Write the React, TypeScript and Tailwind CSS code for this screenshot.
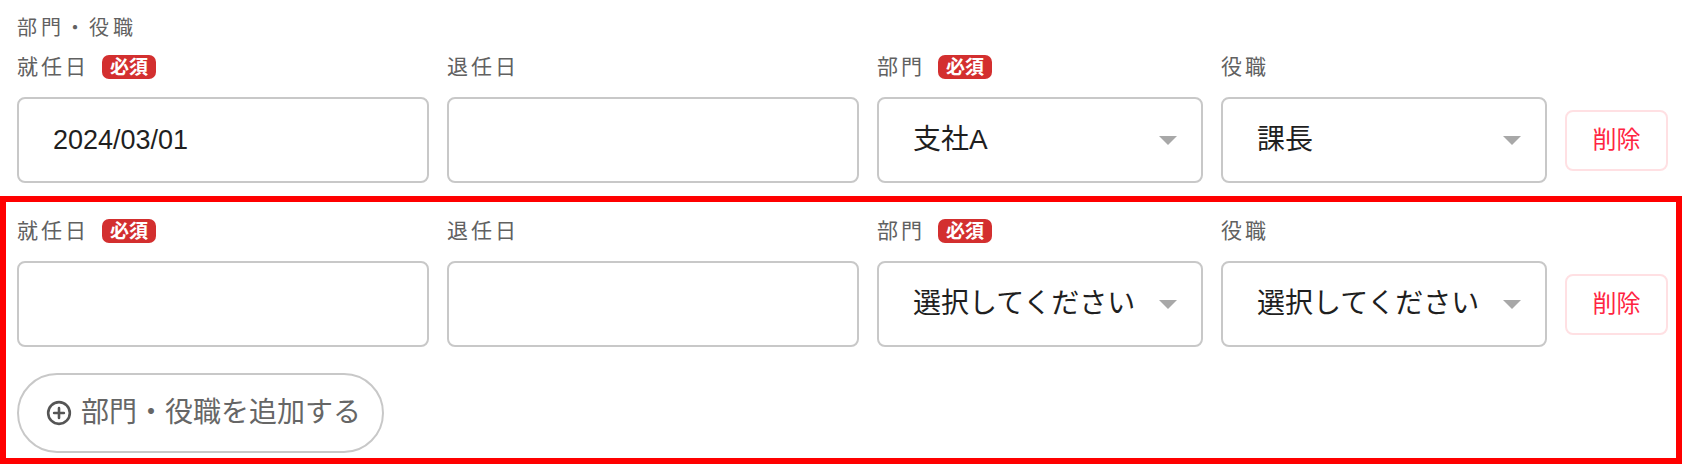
import type { ReactNode } from 'react';

interface RowProps {
    startDate?: string;
    department?: string;
    position?: string;
}

function RequiredBadge() {
    return (
        <span className="ml-[13px] flex h-[24px] w-[54px] items-center justify-center rounded-[7px] bg-[#d32f2f] text-[19px] leading-none font-bold tracking-normal text-white">
            必須
        </span>
    );
}

function FieldLabel({ children, required }: { children: ReactNode; required?: boolean }) {
    return (
        <div className="flex h-[28px] items-center">
            <span className="text-[21px] leading-[28px] tracking-[3px] text-[#616161]">{children}</span>
            {required ? <RequiredBadge /> : null}
        </div>
    );
}

function TextBox({ value }: { value?: string }) {
    return (
        <div className="flex h-[86px] items-center rounded-[8px] border-2 border-[#c8c8c8] bg-white pl-[34px] text-[27px] text-[#1f1f1f]">
            {value}
        </div>
    );
}

function SelectBox({ value }: { value?: string }) {
    return (
        <div className="flex h-[86px] items-center justify-between rounded-[8px] border-2 border-[#c8c8c8] bg-white pr-[24px] pl-[34px] text-[28px] text-[#1f1f1f]">
            <span>{value ?? '選択してください'}</span>
            <svg width="18" height="9" viewBox="0 0 18 9" className="shrink-0">
                <polygon points="0,0 18,0 9,9" fill="#a8a8a8" />
            </svg>
        </div>
    );
}

function AssignmentRow({ startDate, department, position }: RowProps) {
    return (
        <div className="grid grid-cols-[412px_412px_326px_326px_103px] items-center gap-x-[18px] gap-y-[16px]">
            <FieldLabel required>就任日</FieldLabel>
            <FieldLabel>退任日</FieldLabel>
            <FieldLabel required>部門</FieldLabel>
            <FieldLabel>役職</FieldLabel>
            <div />

            <TextBox value={startDate} />
            <TextBox />
            <SelectBox value={department} />
            <SelectBox value={position} />
            <button className="flex h-[61px] w-[103px] items-center justify-center rounded-[8px] border-2 border-[#ffe0e3] bg-white text-[24px] text-[#ff2442]">
                削除
            </button>
        </div>
    );
}

export default function App() {
    return (
        <div className="h-[465px] w-[1694px] bg-white font-['Liberation_Sans','Noto_Sans_CJK_JP',sans-serif]">
            <div className="pt-[14px] pl-[17px]">
                <p className="text-[20px] leading-[28px] tracking-[4px] text-[#616161]">部門・役職</p>
                <div className="mt-[11px]">
                    <AssignmentRow startDate="2024/03/01" department="支社A" position="課長" />
                </div>
            </div>

            <div className="mt-[13px] w-[1682px] border-[6px] border-[#ff0000] pt-[15px] pb-[5px] pl-[11px]">
                <AssignmentRow />
                <button className="mt-[26px] flex h-[80px] w-[367px] items-center gap-[9px] rounded-full border-2 border-[#c8c8c8] bg-white pl-[27px] text-[28px] text-[#666666]">
                    <svg width="26" height="26" viewBox="0 0 24 24" fill="none" stroke="#555555" strokeWidth="2.4" strokeLinecap="round">
                        <circle cx="12" cy="12" r="10" />
                        <path d="M12 7.5v9M7.5 12h9" />
                    </svg>
                    部門・役職を追加する
                </button>
            </div>
        </div>
    );
}
